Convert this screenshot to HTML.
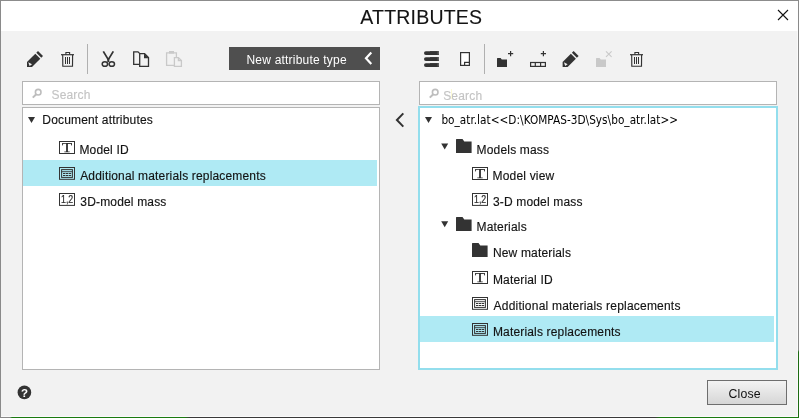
<!DOCTYPE html>
<html><head><meta charset="utf-8"><title>Attributes</title>
<style>
html,body{margin:0;padding:0;}
body{width:799px;height:418px;overflow:hidden;background:#f2f2f2;font-family:"Liberation Sans",sans-serif;font-size:12px;color:#141414;position:relative;}
.abs{position:absolute;}
#win{left:0;top:0;width:799px;height:418px;box-sizing:border-box;will-change:transform;}
#titlebar{left:1px;top:1px;width:797px;height:30px;background:#fff;}
#title{left:0;top:5.2px;width:842.5px;text-align:center;font-size:19.5px;line-height:24px;color:#141414;letter-spacing:0.2px;-webkit-text-stroke:0.1px #141414;}
.bt{left:0;top:0;width:799px;height:1px;background:#8c8c8c;}
.bl{left:0;top:0;width:1.3px;height:418px;background:#8a8a8a;}
.br{left:798px;top:0;width:1px;height:418px;background:linear-gradient(#8a8a8a 0,#8a8a8a 350px,#1c6b12 352px,#1c6b12 418px);}
.bb{left:0;top:417px;width:799px;height:1px;background:linear-gradient(90deg,#8a8a8a 0,#8a8a8a 10px,#1a7a10 12px,#1a7a10 185px,#3a3a3a 190px,#3a3a3a 655px,#1a7a10 660px,#1a7a10 799px);}
.box{background:#fff;border:1px solid #b4b4b4;box-sizing:border-box;}
.t{white-space:nowrap;line-height:14px;letter-spacing:0.17px;-webkit-text-stroke:0.15px currentColor;}
.ph{color:#c4c4c4;}
.sel{background:#afeaf4;}
#newbtn{left:229px;top:47px;width:151px;height:23px;background:#4f4f4f;}
#newbtn span{left:17.5px;top:5.6px;color:#fff;font-size:12px;letter-spacing:0.2px;line-height:14px;white-space:nowrap;}
#close{left:707px;top:380px;width:80px;height:25px;box-sizing:border-box;border:1px solid #6e6e6e;background:linear-gradient(#f3f3f3,#d6d6d6);font-size:12.3px;color:#111;letter-spacing:0.12px;}
#close span{left:20.6px;top:5.6px;line-height:14px;white-space:nowrap;}
.seg{font-family:"DejaVu Sans Condensed","DejaVu Sans","Liberation Sans",sans-serif;}
</style></head>
<body>
<div id="win" class="abs">
<div id="titlebar" class="abs"></div>
<div id="title" class="abs">ATTRIBUTES</div>

<!-- left panel -->
<div class="abs box" style="left:22px;top:81px;width:358px;height:24px;"></div>
<div class="abs t ph" style="left:51.5px;top:87.5px;">Search</div>
<div class="abs box" style="left:22px;top:107px;width:358px;height:263px;"></div>
<div class="abs sel" style="left:23px;top:160px;width:354px;height:26px;"></div>
<div class="abs t" style="left:42.3px;top:112.8px;">Document attributes</div>
<div class="abs t" style="left:79.4px;top:142.6px;">Model ID</div>
<div class="abs t" style="left:80.2px;top:168.6px;">Additional materials replacements</div>
<div class="abs t" style="left:80.3px;top:194.5px;">3D-model mass</div>

<div id="newbtn" class="abs"><span class="abs">New attribute type</span></div>

<!-- right panel -->
<div class="abs box" style="left:419px;top:81px;width:358px;height:24px;"></div>
<div class="abs t ph" style="left:443.2px;top:88.5px;">Search</div>
<div class="abs" style="left:451px;top:89px;width:1px;height:10px;background:#fcfad6;"></div>
<div class="abs" style="left:418px;top:106px;width:360px;height:264px;box-sizing:border-box;border:2px solid #93deed;background:#fff;"></div>
<div class="abs sel" style="left:420px;top:316px;width:354px;height:26px;"></div>
<div class="abs t seg" style="left:441.4px;top:112.6px;letter-spacing:0.03px;font-size:11.7px;color:#000;-webkit-text-stroke:0;">bo_atr.lat&lt;&lt;D:\KOMPAS-3D\Sys\bo_atr.lat&gt;&gt;</div>
<div class="abs t" style="left:476.6px;top:142.6px;">Models mass</div>
<div class="abs t" style="left:492.6px;top:168.6px;">Model view</div>
<div class="abs t" style="left:492.9px;top:194.6px;">3-D model mass</div>
<div class="abs t" style="left:476.6px;top:219.6px;">Materials</div>
<div class="abs t" style="left:492.9px;top:245.6px;">New materials</div>
<div class="abs t" style="left:492.9px;top:272.6px;">Material ID</div>
<div class="abs t" style="left:493.6px;top:298.6px;letter-spacing:0.21px;">Additional materials replacements</div>
<div class="abs t" style="left:492.9px;top:324.6px;">Materials replacements</div>

<div id="close" class="abs"><span class="abs">Close</span></div>

<svg class="abs" style="left:0;top:0" width="799" height="418" viewBox="0 0 799 418">
<defs>
 <g id="pencil">
  <path d="M0,16 V11 L8.3,2.7 L13.3,7.7 L5,16 Z" fill="#333"/>
  <path d="M9.3,1.7 L11,0 L16,5 L14.3,6.7 Z" fill="#333"/>
  <path d="M1.3,11.3 L5,13.2 L2.6,15 Z" fill="#f0f0f0"/>
 </g>
 <g id="trash" fill="none" stroke="#333" stroke-width="1.3">
  <path d="M0,2.7 H13" stroke-width="1.2"/>
  <path d="M4.9,2.6 V0.5 H8.6 V2.6" stroke-width="1.1"/>
  <path d="M1.7,3 L1.8,14.2 H11.5 L11.6,3" stroke-width="1.15"/>
  <path d="M4.5,5 V12 M6.5,5 V12 M8.5,5 V12" stroke-width="1"/>
 </g>
 <g id="folder">
  <path d="M0,0.6 Q0,0 0.6,0 H6.5 L8.3,2.5 H15.6 V14 H0 Z" fill="#333"/>
 </g>
 <g id="ticon">
  <rect x="0.5" y="0.5" width="15" height="12" fill="#fff" stroke="#333" stroke-width="1"/>
  <text transform="translate(8,10.55) scale(1.2,1)" text-rendering="geometricPrecision" text-anchor="middle" font-family="Liberation Serif,serif" font-size="13.7" fill="#222" stroke="#222" stroke-width="0.25">T</text>
 </g>
 <g id="tbl">
  <rect x="0.5" y="0.5" width="15" height="11.8" fill="none" stroke="#333" stroke-width="1"/>
  <rect x="2.6" y="2.6" width="10.8" height="7.8" fill="none" stroke="#333" stroke-width="1"/>
  <path d="M2.6,4.7 H13.4" stroke="#333" stroke-width="0.9"/>
  <path d="M4,6.5 H6.4 M6.9,6.5 H9.3 M9.8,6.5 H12.2 M4,8.5 H6.4 M6.9,8.5 H9.3 M9.8,8.5 H12.2" stroke="#333" stroke-width="1"/>
 </g>
 <g id="num">
  <rect x="0.5" y="0.5" width="15" height="11.9" fill="#fff" stroke="#333" stroke-width="1"/>
  <text transform="translate(8.1,10.05) scale(0.8,1)" text-anchor="middle" font-family="Liberation Sans,sans-serif" font-size="11" fill="#2a2a2a" stroke="#2a2a2a" stroke-width="0.2">1,2</text>
 </g>
 <g id="tri"><path d="M0,0 H7 L3.5,6 Z" fill="#333"/></g>
 <g id="mag" fill="none" stroke="#bdbdbd" stroke-width="1.6">
  <circle cx="6.2" cy="3.6" r="2.8"/>
  <path d="M4.2,5.6 L0.8,9" stroke-width="2"/>
 </g>
</defs>

<!-- close X -->
<path d="M778,10 L788,20 M788,10 L778,20" stroke="#111" stroke-width="1.1" fill="none"/>

<!-- left toolbar -->
<use href="#pencil" x="27" y="51"/>
<use href="#trash" x="61" y="52"/>
<rect x="87" y="44" width="1" height="30" fill="#b0b0b0"/>
<!-- scissors -->
<g fill="none" stroke="#333">
 <path d="M103.3,51.4 L108.3,59.6 L113.3,51.4" stroke-width="1.8" stroke-linejoin="miter"/>
 <path d="M108.3,58 V62" stroke-width="2"/>
 <ellipse cx="104.9" cy="64" rx="2.7" ry="2.35" stroke-width="1.5"/>
 <ellipse cx="111.8" cy="64" rx="2.7" ry="2.35" stroke-width="1.5"/>
</g>
<!-- copy -->
<g fill="none" stroke="#333" stroke-width="1.3">
 <path d="M139.6,64.4 H133.7 V51.8 H138 L139.6,53.4"/>
 <path d="M139.7,53.7 H144.6 L148.5,57.6 V66.3 H139.7 Z" fill="#f2f2f2"/>
 <path d="M144,53.4 V58.2 H148.8 Z" fill="#333" stroke="none"/>
</g>
<!-- paste disabled -->
<g fill="none" stroke="#c9c9c9" stroke-width="1.3">
 <path d="M174,65.4 H166.6 V52.8 H176.4 V57"/>
 <rect x="169" y="51" width="5" height="2.6" fill="#c9c9c9" stroke="none"/>
 <path d="M174.4,57.6 H178.4 L181.4,60.6 V66.4 H174.4 Z" fill="#f2f2f2"/>
 <path d="M178.4,57.6 V60.6 H181.4"/>
</g>
<!-- new attr chevron -->
<path d="M371.3,52.6 L366,58.3 L371.3,64" fill="none" stroke="#fff" stroke-width="2.2"/>

<!-- search mags -->
<use href="#mag" x="32" y="88.6"/>
<use href="#mag" x="429" y="88.6"/>

<!-- middle chevron -->
<path d="M403.3,113.4 L396.9,120 L403.3,126.6" fill="none" stroke="#333" stroke-width="2"/>

<!-- left tree -->
<use href="#tri" x="28" y="117"/>
<use href="#ticon" x="59" y="141"/>
<use href="#tbl" x="59" y="167"/>
<use href="#num" x="59" y="193"/>

<!-- right toolbar -->
<g fill="#333">
 <rect x="424" y="51.2" width="15" height="3.8" rx="1.9"/><rect x="430" y="51.2" width="9" height="3.8"/>
 <rect x="424" y="57.2" width="15" height="3.8" rx="1.9"/><rect x="430" y="57.2" width="9" height="3.8"/>
 <rect x="424" y="63.2" width="15" height="3.8" rx="1.9"/><rect x="430" y="63.2" width="9" height="3.8"/>
</g>
<g fill="#fff" stroke="#333" stroke-width="1.2">
 <rect x="460.6" y="52.6" width="8.8" height="12.8"/>
 <rect x="464.6" y="62.4" width="4.8" height="3"/>
</g>
<path d="M438.2,51.6 V54.6 M438.2,57.6 V60.6 M438.2,63.6 V66.6" stroke="#8a8a8a" stroke-width="0.7" fill="none"/>
<rect x="484" y="44" width="1" height="30" fill="#b0b0b0"/>
<!-- folder plus -->
<path d="M497,58.6 Q497,58 497.6,58 H500.6 L501.8,59.6 H507 V67 H497 Z" fill="#333"/>
<path d="M508,53.6 H513.2 M510.6,51 V56.2" stroke="#333" stroke-width="1.2" fill="none"/>
<!-- row plus -->
<g fill="none" stroke="#333" stroke-width="1.2">
 <rect x="530.6" y="62.5" width="14.8" height="3.9"/>
 <path d="M535.3,62.5 V66.4 M540.6,62.5 V66.4"/>
 <path d="M540.8,53.6 H546 M543.4,51 V56.2"/>
</g>
<use href="#pencil" x="562.6" y="51"/>
<!-- folder x disabled -->
<path d="M596,58.6 Q596,58 596.6,58 H599.6 L600.8,59.6 H606 V67 H596 Z" fill="#c9c9c9"/>
<path d="M606,51.4 L611.6,56.8 M611.6,51.4 L606,56.8" stroke="#c9c9c9" stroke-width="1.1" fill="none"/>
<use href="#trash" x="630" y="52"/>

<!-- right tree -->
<use href="#tri" x="425" y="117"/>
<use href="#tri" x="441.2" y="143.4"/>
<use href="#folder" x="456" y="139"/>
<use href="#ticon" x="472" y="167"/>
<use href="#num" x="472" y="193"/>
<use href="#tri" x="441.2" y="221.2"/>
<use href="#folder" x="456" y="217"/>
<use href="#folder" x="472" y="243"/>
<use href="#ticon" x="472" y="271"/>
<use href="#tbl" x="472" y="297"/>
<use href="#tbl" x="472" y="323"/>

<!-- help -->
<circle cx="24.4" cy="392.4" r="6.8" fill="#333"/>
<text x="24.4" y="396.6" text-anchor="middle" font-family="Liberation Sans,sans-serif" font-weight="bold" font-size="11.5" fill="#fff">?</text>
</svg>

<div class="abs" style="left:1px;top:416px;width:797px;height:1px;background:#fafafa"></div><div class="abs" style="left:797px;top:31px;width:1px;height:386px;background:#fafafa"></div><div class="abs bt"></div><div class="abs bl"></div><div class="abs br"></div><div class="abs bb"></div>
</div>
</body></html>
